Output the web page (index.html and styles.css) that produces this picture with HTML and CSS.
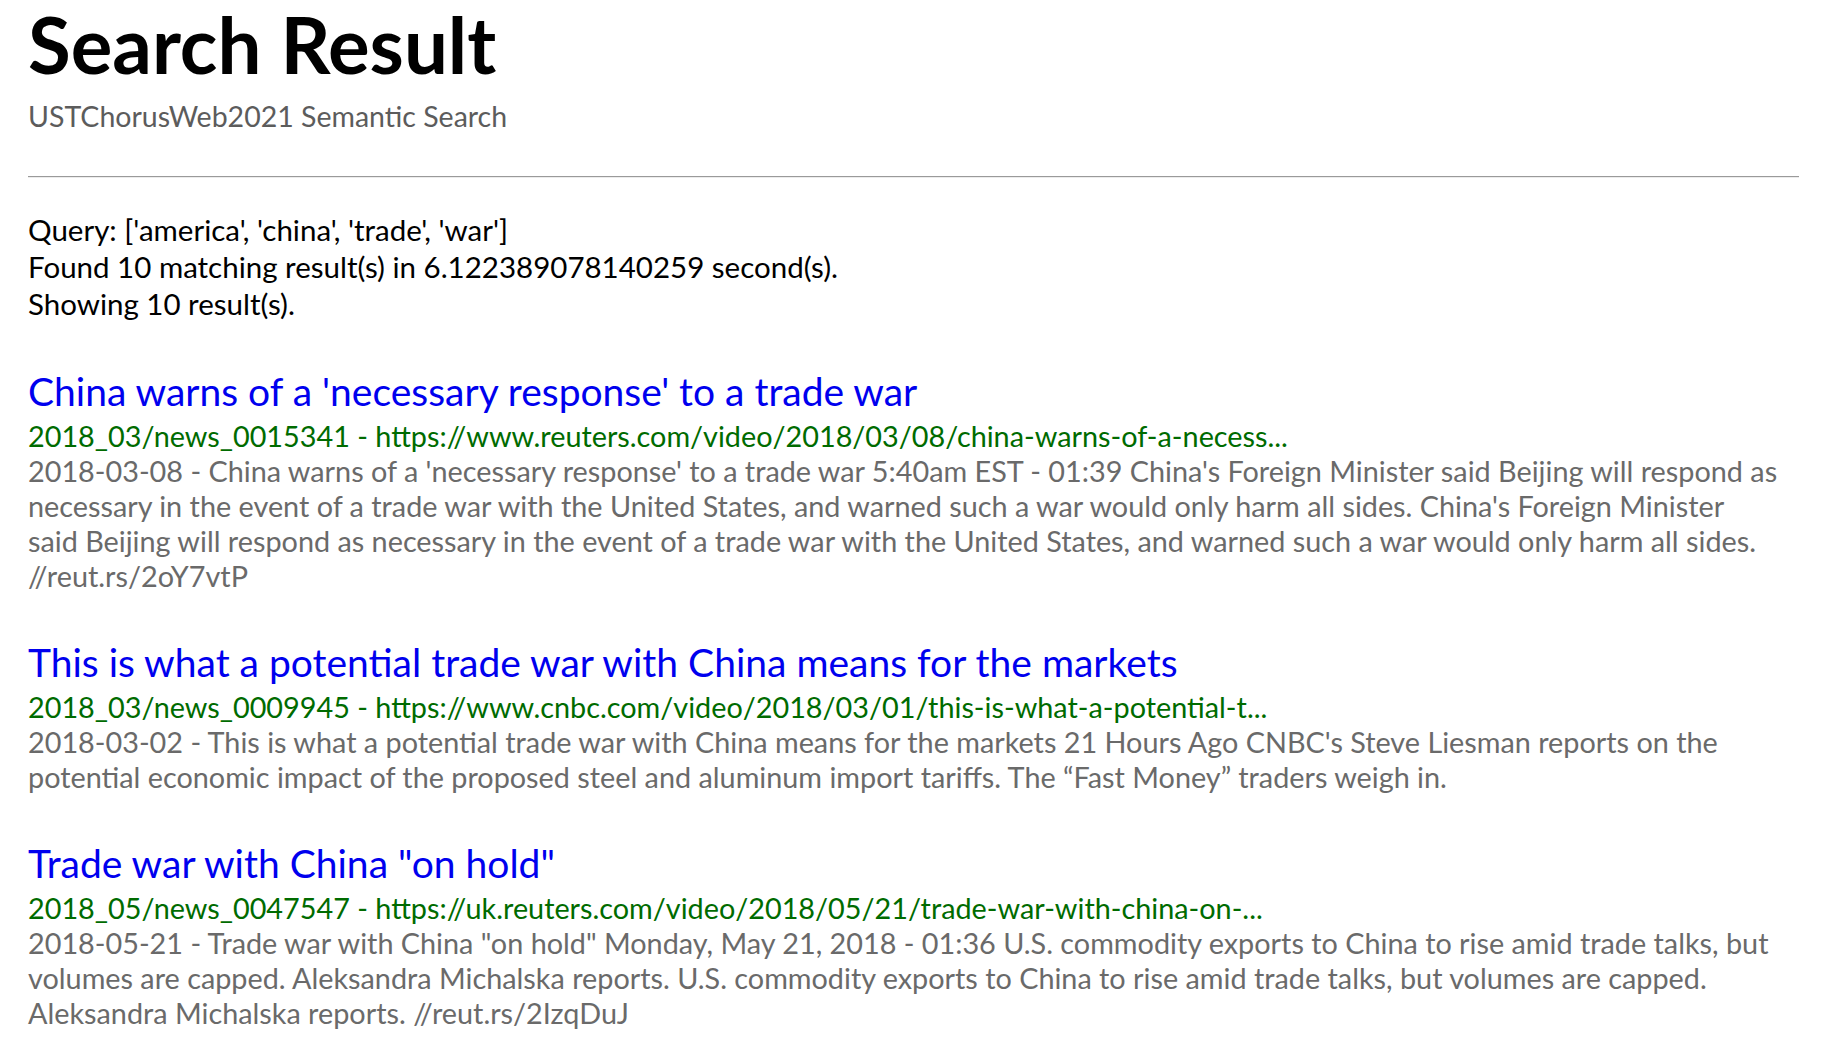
FILE: index.html
```html
<!DOCTYPE html>
<html lang="en">
<head>
<meta charset="utf-8">
<title>Search Result</title>
<link rel="stylesheet" href="styles.css">
</head>
<body>
<main class="page">
  <header class="masthead">
    <h1 class="title">Search Result</h1>
    <p class="subtitle">USTChorusWeb2021 Semantic Search</p>
  </header>
  <div class="rule"></div>
  <section class="summary">
    <div>Query: ['america', 'china', 'trade', 'war']</div>
    <div>Found 10 matching result(s) in 6.122389078140259 second(s).</div>
    <div>Showing 10 result(s).</div>
  </section>
  <section class="results">
    <article class="result">
      <a class="result-title" href="#">China warns of a 'necessary response' to a trade war</a>
      <div class="result-url">2018_03/news_0015341 - https://www.reuters.com/video/2018/03/08/china-warns-of-a-necess...</div>
      <p class="result-text">2018-03-08 - China warns of a 'necessary response' to a trade war 5:40am EST - 01:39 China's Foreign Minister said Beijing will respond as necessary in the event of a trade war with the United States, and warned such a war would only harm all sides. China's Foreign Minister said Beijing will respond as necessary in the event of a trade war with the United States, and warned such a war would only harm all sides. //reut.rs/2oY7vtP</p>
    </article>
    <article class="result">
      <a class="result-title" href="#">This is what a potential trade war with China means for the markets</a>
      <div class="result-url">2018_03/news_0009945 - https://www.cnbc.com/video/2018/03/01/this-is-what-a-potential-t...</div>
      <p class="result-text">2018-03-02 - This is what a potential trade war with China means for the markets 21 Hours Ago CNBC's Steve Liesman reports on the potential economic impact of the proposed steel and aluminum import tariffs. The “Fast Money” traders weigh in.</p>
    </article>
    <article class="result">
      <a class="result-title" href="#">Trade war with China "on hold"</a>
      <div class="result-url">2018_05/news_0047547 - https://uk.reuters.com/video/2018/05/21/trade-war-with-china-on-...</div>
      <p class="result-text">2018-05-21 - Trade war with China "on hold" Monday, May 21, 2018 - 01:36 U.S. commodity exports to China to rise amid trade talks, but volumes are capped. Aleksandra Michalska reports. U.S. commodity exports to China to rise amid trade talks, but volumes are capped. Aleksandra Michalska reports. //reut.rs/2IzqDuJ</p>
    </article>
  </section>
</main>
</body>
</html>
```

FILE: styles.css
```css
html, body {
  margin: 0;
  padding: 0;
  background: #ffffff;
}

body {
  font-family: Lato, "Open Sans", "Liberation Sans", sans-serif;
  color: #000000;
}

.page {
  padding: 4px 26px 0 28px;
}

.masthead {
  display: flex;
  flex-direction: column;
}

.title {
  margin: 0;
  font-size: 78px;
  line-height: 80px;
  font-weight: 700;
  color: #000000;
}

.subtitle {
  margin: 14px 0 0 0;
  font-size: 28.5px;
  line-height: 36px;
  color: #5c5c5c;
}

.rule {
  margin-top: 42px;
  height: 0;
  border-top: 1px solid #9a9a9a;
  border-bottom: 1px solid #ececec;
}

.summary {
  margin-top: 33px;
  font-size: 29.5px;
  line-height: 37px;
  color: #000000;
}

.results {
  display: flex;
  flex-direction: column;
  gap: 45px;
  margin-top: 46px;
}

.result {
  display: flex;
  flex-direction: column;
}

.result-title {
  font-size: 39px;
  line-height: 46px;
  color: #0000ee;
  text-decoration: none;
}

.result-url {
  margin-top: 4px;
  font-size: 28.8px;
  line-height: 36px;
  color: #006b00;
}

.result-text {
  margin: 0;
  padding-right: 20.5px;
  font-size: 28.8px;
  line-height: 35px;
  color: #6a6a6a;
}
```
